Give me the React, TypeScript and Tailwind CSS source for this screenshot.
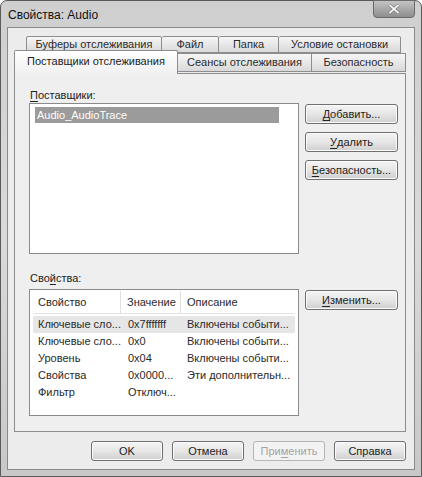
import React from 'react';

const font = { fontFamily: '"Liberation Sans", Arial, sans-serif' };

function U({ children }: { children: React.ReactNode }) {
  return <span className="underline underline-offset-[2px] decoration-[0.5px]">{children}</span>;
}

function Btn({ children, w = 'w-[93px]', disabled = false }: { children: React.ReactNode; w?: string; disabled?: boolean }) {
  return (
    <div
      className={`${w} h-[20px] flex items-center justify-center rounded-[3px] border text-[11px] ${
        disabled
          ? 'border-[#b5b5b5] bg-[#f3f3f3] text-[#a3a3a3]'
          : 'border-[#6f6f6f] bg-gradient-to-b from-[#f4f4f4] via-[#e6e6e6] to-[#cfcfcf] text-[#222] shadow-[inset_0_0_0_1px_#fbfbfb]'
      }`}
    >
      {children}
    </div>
  );
}

function Tab({ label, w }: { label: string; w: string }) {
  return (
    <div className={`${w} h-full flex items-center justify-center border border-[#8d8d8d] border-l-0 first:border-l bg-gradient-to-b from-[#f6f6f6] to-[#d9d9d9] text-[11px] text-[#2a2a2a] rounded-t-[2px]`}>
      {label}
    </div>
  );
}

const rows = [
  ['Ключевые сло...', '0x7fffffff', 'Включены событи...'],
  ['Ключевые сло...', '0x0', 'Включены событи...'],
  ['Уровень', '0x04', 'Включены событи...'],
  ['Свойства', '0x0000...', 'Эти дополнительн...'],
  ['Фильтр', 'Отключ...', ''],
];

export default function App() {
  return (
    <div style={font} className="w-[422px] h-[477px] bg-white">
      <div className="w-[422px] h-[477px] flex flex-col rounded-t-[7px] border border-[#5a5a5a] bg-gradient-to-b from-[#cfcfcf] via-[#dadada] to-[#c8c8c8]">
        {/* title bar */}
        <div className="h-[26px] flex items-start justify-between pl-[7px] pr-[6px]">
          <div className="mt-[8px] text-[12px] text-[#111] leading-none">Свойства: Audio</div>
          <div className="w-[42px] h-[18px] -mt-[1px] rounded-b-[4px] border border-[#6a6a6a] bg-gradient-to-b from-[#c4c4c4] via-[#a8a8a8] to-[#8e8e8e] flex items-center justify-center">
            <svg width="12" height="10" viewBox="0 0 12 10">
              <path d="M1.5 1 L10.5 9 M10.5 1 L1.5 9" stroke="#666" strokeWidth="3" />
              <path d="M1.5 1 L10.5 9 M10.5 1 L1.5 9" stroke="#f4f4f4" strokeWidth="1.8" />
            </svg>
          </div>
        </div>

        {/* client */}
        <div className="ml-[6px] w-[408px] h-[443px] border border-[#8a8a8a] bg-[#ececec] pl-[6px] pt-[8px]">
          {/* tabs */}
          <div className="w-[392px]">
            <div className="h-[17px] ml-[12px] flex">
              <Tab label="Буферы отслеживания" w="w-[136px]" />
              <Tab label="Файл" w="w-[57px]" />
              <Tab label="Папка" w="w-[60px]" />
              <Tab label="Условие остановки" w="w-[122px]" />
            </div>
            <div className="h-[20px] flex items-start">
              <div className="relative z-10 -mt-[3px] w-[164px] h-[24px] flex items-center justify-center border border-b-0 border-[#8d8d8d] bg-gradient-to-b from-[#ffffff] to-[#f0f0f0] text-[11px] text-[#222] rounded-t-[2px] pb-[2px]">
                Поставщики отслеживания
              </div>
              <div className="w-[134px] h-[19px] flex items-center justify-center border border-l-0 border-[#8d8d8d] bg-gradient-to-b from-[#f6f6f6] to-[#d9d9d9] text-[11px] text-[#2a2a2a]">
                Сеансы отслеживания
              </div>
              <div className="w-[94px] h-[19px] flex items-center justify-center border border-l-0 border-[#8d8d8d] bg-gradient-to-b from-[#f6f6f6] to-[#d9d9d9] text-[11px] text-[#2a2a2a]">
                Безопасность
              </div>
            </div>

            {/* panel */}
            <div className="h-[359px] border border-[#8d8d8d] bg-[#efefef] pl-[14px] pt-[13px]">
              <div className="h-[16px] text-[11px] text-[#222] leading-[16px] pl-[1px]">
                <U>П</U>оставщики:
              </div>
              <div className="flex">
                <div className="w-[270px] h-[151px] border border-[#8a8a8a] bg-white pt-[3px] pl-[5px]">
                  <div className="w-[244px] h-[16px] bg-[#9b9b9b] text-white text-[11px] leading-[16px] pl-[2px]">Audio_AudioTrace</div>
                </div>
                <div className="ml-[6px] mt-[1px] flex flex-col gap-[8px]">
                  <Btn><U>Д</U>обавить...</Btn>
                  <Btn><U>У</U>далить</Btn>
                  <Btn><U>Б</U>езопасность...</Btn>
                </div>
              </div>

              <div className="mt-[16px] h-[16px] text-[11px] text-[#222] leading-[16px] pl-[1px]">
                Сво<U>й</U>ства:
              </div>
              <div className="mt-[3px] flex">
                <div className="w-[270px] h-[127px] border border-[#8a8a8a] bg-white px-[3px] pt-[1px] text-[11px] text-[#2a2a2a]">
                  <div className="h-[23px] flex items-center border-b border-[#e2e2e2]">
                    <div className="w-[88px] h-full flex items-center pl-[5px] border-r border-[#e0e0e0]">Свойство</div>
                    <div className="w-[60px] h-full flex items-center pl-[6px] border-r border-[#e0e0e0]">Значение</div>
                    <div className="flex-1 h-full flex items-center pl-[6px]">Описание</div>
                  </div>
                  <div className="mt-[2px] flex flex-col">
                    {rows.map((r, i) => (
                      <div key={i} className={`h-[17px] flex items-center ${i === 0 ? 'bg-[#e6e6e6]' : ''}`}>
                        <div className="w-[88px] pl-[5px] whitespace-nowrap">{r[0]}</div>
                        <div className="w-[60px] pl-[7px] whitespace-nowrap">{r[1]}</div>
                        <div className="flex-1 pl-[6px] whitespace-nowrap">{r[2]}</div>
                      </div>
                    ))}
                  </div>
                </div>
                <div className="ml-[6px] mt-[1px]">
                  <Btn><U>И</U>зменить...</Btn>
                </div>
              </div>
            </div>
          </div>

          {/* bottom buttons */}
          <div className="w-[392px] mt-[9px] flex justify-end gap-[9px]">
            <Btn w="w-[72px]">OK</Btn>
            <Btn w="w-[72px]">Отмена</Btn>
            <Btn w="w-[72px]" disabled>При<U>м</U>енить</Btn>
            <Btn w="w-[72px]">Справка</Btn>
          </div>
        </div>
      </div>
    </div>
  );
}
